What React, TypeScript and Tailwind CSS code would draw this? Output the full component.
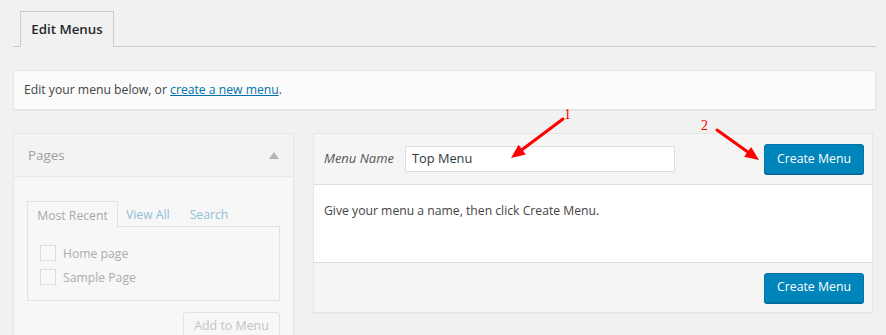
const sans = "font-['Open_Sans','Noto_Sans',sans-serif]";

function Arrow({ x1, y1, x2, y2 }: { x1: number; y1: number; x2: number; y2: number }) {
  // line plus a filled head pointing at (x2, y2)
  const a = Math.atan2(y2 - y1, x2 - x1);
  const len = 14;
  const w = 6;
  const bx = x2 - len * Math.cos(a);
  const by = y2 - len * Math.sin(a);
  const px = -Math.sin(a) * w;
  const py = Math.cos(a) * w;
  return (
    <g>
      <line x1={x1} y1={y1} x2={bx + 2 * Math.cos(a)} y2={by + 2 * Math.sin(a)} stroke="#f00" strokeWidth="3" strokeLinecap="round" />
      <polygon points={`${x2},${y2} ${bx + px},${by + py} ${bx - px},${by - py}`} fill="#f00" />
    </g>
  );
}

function PagesBox() {
  return (
    <div className="w-[281px] shrink-0 border border-[#e5e5e5] bg-[#f7f7f7] shadow-[0_1px_1px_rgba(0,0,0,0.04)]">
      <div className="flex h-[43px] items-center justify-between border-b border-[#e8e8e8] bg-[#f3f3f3] pl-[14px] pr-[14px]">
        <span className="text-[13.4px] text-[#a0a0a0]">Pages</span>
        <span className="h-0 w-0 border-x-[5px] border-b-[7px] border-x-transparent border-b-[#b4b4b4]" />
      </div>
      <div className="px-[13px] pt-[24px]">
        <div className="flex h-[25px] items-end text-[12.2px]">
          <span className="-mb-px flex h-[26px] w-[91px] items-center justify-center border border-b-0 border-[#e2e2e2] bg-[#f7f7f7] pt-[3px] text-[#a8a8a8]">
            Most Recent
          </span>
          <span className="ml-[8px] flex h-[25px] items-center pt-[3px] text-[#8dbfd9]">View All</span>
          <span className="ml-[20px] flex h-[25px] items-center pt-[3px] text-[#8dbfd9]">Search</span>
        </div>
        <div className="h-[75px] border border-[#e2e2e2] px-[12px] pt-[18px] text-[12.2px] text-[#acacac]">
          <label className="flex h-[24px] items-start gap-[7px]">
            <span className="h-[16px] w-[16px] border border-[#dcdcdc] bg-[#f9f9f9]" />
            <span className="leading-[18px]">Home page</span>
          </label>
          <label className="flex h-[24px] items-start gap-[7px]">
            <span className="h-[16px] w-[16px] border border-[#dcdcdc] bg-[#f9f9f9]" />
            <span className="leading-[18px]">Sample Page</span>
          </label>
        </div>
        <div className="flex justify-end pt-[11px]">
          <span className="flex h-[28px] w-[97px] items-center justify-center rounded-[3px] border border-[#e2e2e2] bg-[#f7f7f7] text-[12.4px] text-[#c4c4c4]">
            Add to Menu
          </span>
        </div>
      </div>
    </div>
  );
}

function CreateButton() {
  return (
    <button className="flex h-[30px] w-[100px] items-center justify-center rounded-[3px] border border-[#0073aa] bg-[#0085ba] text-[12.3px] text-white shadow-[0_1px_0_#006799]">
      Create Menu
    </button>
  );
}

export default function App() {
  return (
    <div className={`relative h-[335px] w-[886px] overflow-hidden bg-[#f1f1f1] ${sans} text-[#444]`}>
      {/* tab bar */}
      <div className="ml-[13px] mr-[10px] flex h-[47px] items-end border-b border-[#cccccc] pl-[7px]">
        <div className="-mb-px flex h-[36px] w-[94px] items-center justify-center border border-b-0 border-[#cccccc] bg-[#f1f1f1] text-[13.3px] font-semibold text-[#23282d]">
          Edit Menus
        </div>
      </div>

      {/* notice */}
      <div className="ml-[13px] mr-[10px] mt-[23px] flex h-[40px] items-center border border-[#e5e5e5] bg-[#fbfbfb] px-[10px] pt-[1px] text-[12.2px] shadow-[0_1px_1px_rgba(0,0,0,0.04)]">
        <span>
          Edit your menu below, or{" "}
          <span className="text-[#0073aa] underline">create a new menu</span>.
        </span>
      </div>

      <div className="mt-[23px] flex gap-[19px] pl-[13px] pr-[13px]">
        <PagesBox />

        <div className="h-[180px] flex-1 border border-[#e5e5e5] bg-white shadow-[0_1px_1px_rgba(0,0,0,0.04)]">
          <div className="flex h-[51px] items-center border-b border-[#dfdfdf] bg-[#f5f5f5] pl-[10px] pr-[8px]">
            <span className="w-[81px] text-[13px] italic text-[#555]">Menu Name</span>
            <div className="flex h-[26px] w-[270px] items-center border border-[#dddddd] bg-white px-[6px] text-[12.8px] text-[#32373c]">
              Top Menu
            </div>
            <div className="ml-auto">
              <CreateButton />
            </div>
          </div>
          <div className="h-[77px] px-[10px] pt-[17px] text-[12.2px]">
            Give your menu a name, then click Create Menu.
          </div>
          <div className="flex h-[50px] items-center justify-end border-t border-[#dddddd] bg-[#f5f5f5] pr-[8px]">
            <CreateButton />
          </div>
        </div>
      </div>

      {/* annotations */}
      <svg className="pointer-events-none absolute left-0 top-0" width="886" height="335">
        <Arrow x1={563} y1={119} x2={511} y2={158} />
        <Arrow x1={717} y1={130} x2={759} y2={160} />
        <text x="564" y="119" fill="#f00" fontSize="14" fontFamily="Liberation Serif, serif">1</text>
        <text x="701" y="130" fill="#f00" fontSize="14" fontFamily="Liberation Serif, serif">2</text>
      </svg>
    </div>
  );
}
